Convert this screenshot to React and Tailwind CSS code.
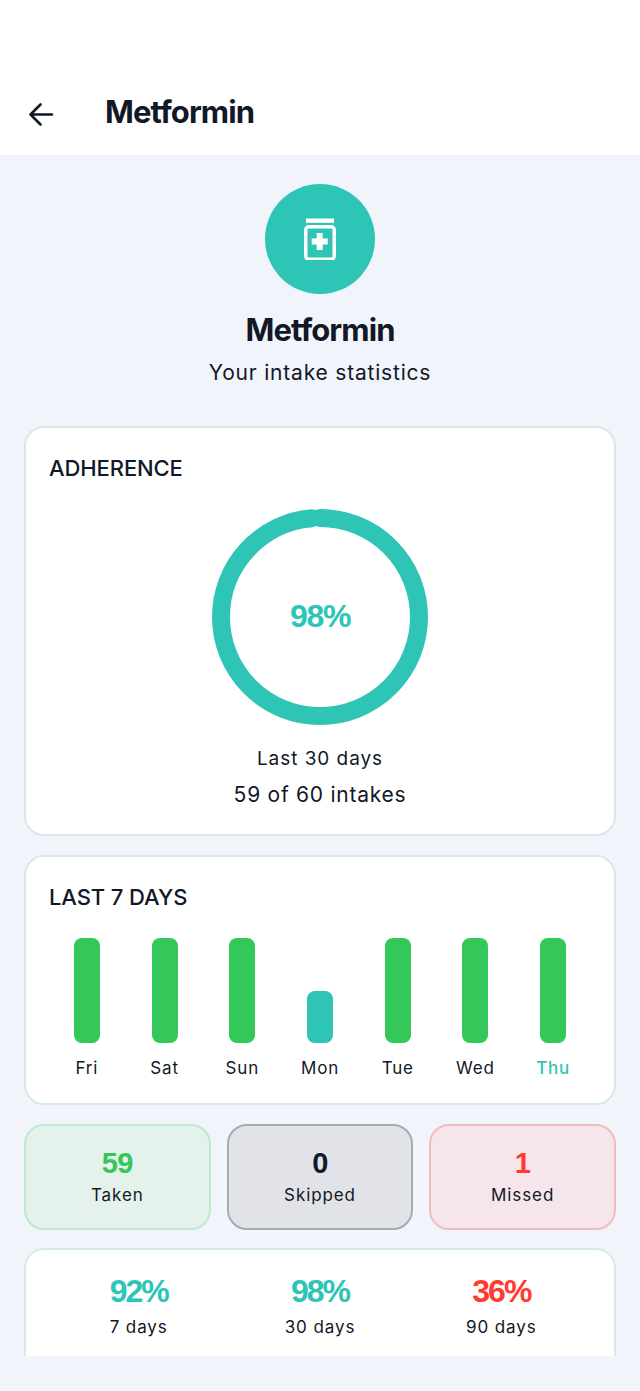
const days = [
  { label: 'Fri', h: 'h-[105px]', bar: 'bg-[#34c759]' },
  { label: 'Sat', h: 'h-[105px]', bar: 'bg-[#34c759]' },
  { label: 'Sun', h: 'h-[105px]', bar: 'bg-[#34c759]' },
  { label: 'Mon', h: 'h-[52px]', bar: 'bg-[#2ec4b6]' },
  { label: 'Tue', h: 'h-[105px]', bar: 'bg-[#34c759]' },
  { label: 'Wed', h: 'h-[105px]', bar: 'bg-[#34c759]' },
  { label: 'Thu', h: 'h-[105px]', bar: 'bg-[#34c759]', today: true },
];

const tiles = [
  { value: '59', label: 'Taken', box: 'bg-[#e5f2ec] border-[#c0e8cd]', text: 'text-[#34c759]' },
  { value: '0', label: 'Skipped', box: 'bg-[#e1e3e9] border-[#a8aab2]', text: 'text-[#111827]' },
  { value: '1', label: 'Missed', box: 'bg-[#f6e5ea] border-[#f3bcbc]', text: 'text-[#ff3b30]' },
];

const periods = [
  { value: '92%', label: '7 days', text: 'text-[#2ec4b6]' },
  { value: '98%', label: '30 days', text: 'text-[#2ec4b6]' },
  { value: '36%', label: '90 days', text: 'text-[#ff3b30]' },
];

function PillIcon() {
  return (
    <svg width="32" height="42" viewBox="0 0 32 42" fill="none">
      <rect x="2" y="0.5" width="28" height="4.3" fill="#fff" />
      <rect x="1.75" y="8.75" width="28.5" height="32.5" rx="3" stroke="#fff" strokeWidth="3.5" />
      <path d="M12.7 15h6v5.5h5v6h-5V32h-6v-5.5h-5v-6h5z" fill="#fff" />
    </svg>
  );
}

function Ring() {
  const c = 2 * Math.PI * 99;
  return (
    <svg width="216" height="216" viewBox="0 0 216 216" className="-rotate-90">
      <circle
        cx="108"
        cy="108"
        r="99"
        fill="none"
        stroke="#2ec4b6"
        strokeWidth="18"
        strokeLinecap="round"
        strokeDasharray={`${c * 0.985} ${c}`}
      />
    </svg>
  );
}

export default function App() {
  return (
    <div className="h-[1391px] w-[640px] overflow-hidden bg-[#f1f4fb] font-['Inter',sans-serif] text-[#111827]">
      <header className="flex h-[155px] items-center bg-white pl-[28px] pt-[89px] pb-[20px]">
        <svg className="mt-[4px]" width="26" height="24" viewBox="0 0 26 24" fill="none" stroke="#111827" strokeWidth="2.6" strokeLinecap="round" strokeLinejoin="round">
          <path d="M24 12.5H3M12.5 2.5L2.5 12.5l10 10" />
        </svg>
        <h1 className="ml-[51px] text-[31px] leading-[38px] font-bold tracking-[-0.9px]">Metformin</h1>
      </header>

      <main className="h-[1201px] overflow-hidden px-[24px] pt-[29px]">
        <div className="flex flex-col items-center">
          <div className="flex h-[110px] w-[110px] items-center justify-center rounded-full bg-[#2ec4b6]">
            <PillIcon />
          </div>
          <h2 className="mt-[17px] text-[31px] leading-[38px] font-bold tracking-[-0.9px]">Metformin</h2>
          <p className="mt-[9px] text-[21px] leading-[30px] tracking-[0.8px]">Your intake statistics</p>
        </div>

        <section className="mt-[38px] h-[410px] rounded-[20px] border-2 border-[#d6e9ea] bg-white px-[23px] pt-[26px]">
          <h3 className="text-[22px] leading-[28px] font-medium tracking-[-0.1px]">ADHERENCE</h3>
          <div className="relative mx-auto mt-[27px] h-[216px] w-[216px]">
            <Ring />
            <span className="absolute inset-0 flex items-center justify-center pb-[2px] font-['Liberation_Sans',sans-serif] text-[32px] font-bold tracking-[-1.3px] text-[#2ec4b6]">98%</span>
          </div>
          <p className="mt-[20px] text-center text-[19px] leading-[28px] tracking-[0.95px]">Last 30 days</p>
          <p className="mt-[8px] text-center text-[21px] leading-[28px] tracking-[0.75px]">59 of 60 intakes</p>
        </section>

        <section className="mt-[19px] h-[250px] rounded-[20px] border-2 border-[#d6e9ea] bg-white px-[22px] pt-[26px]">
          <h3 className="ml-[1px] text-[22px] leading-[28px] font-medium tracking-[-0.1px]">LAST 7 DAYS</h3>
          <div className="mt-[27px] grid grid-cols-7">
            {days.map((d) => (
              <div key={d.label} className="flex flex-col items-center">
                <div className="flex h-[105px] items-end">
                  <div className={`w-[26px] rounded-[8px] ${d.h} ${d.bar}`} />
                </div>
                <span className={`mt-[14px] text-[17px] leading-[22px] tracking-[0.8px] ${d.today ? 'font-medium text-[#2ec4b6]' : ''}`}>
                  {d.label}
                </span>
              </div>
            ))}
          </div>
        </section>

        <div className="mt-[19px] grid grid-cols-3 gap-[16px]">
          {tiles.map((t) => (
            <div key={t.label} className={`flex h-[106px] flex-col items-center rounded-[20px] border-2 pt-[20px] ${t.box}`}>
              <span className={`font-['Liberation_Sans',sans-serif] text-[29px] leading-[34px] font-bold tracking-[-0.5px] ${t.text}`}>{t.value}</span>
              <span className="mt-[3px] text-[17px] leading-[24px] tracking-[0.9px]">{t.label}</span>
            </div>
          ))}
        </div>

        <section className="mt-[18px] h-[160px] rounded-[20px] border-2 border-[#d6e9ea] bg-white px-[22px] pt-[22px]">
          <div className="grid grid-cols-3">
            {periods.map((p) => (
              <div key={p.label} className="flex flex-col items-center">
                <span className={`font-['Liberation_Sans',sans-serif] text-[32px] leading-[38px] font-bold tracking-[-2px] ${p.text}`}>{p.value}</span>
                <span className="mt-[5px] text-[17px] leading-[24px] tracking-[0.9px]">{p.label}</span>
              </div>
            ))}
          </div>
        </section>
      </main>
    </div>
  );
}
